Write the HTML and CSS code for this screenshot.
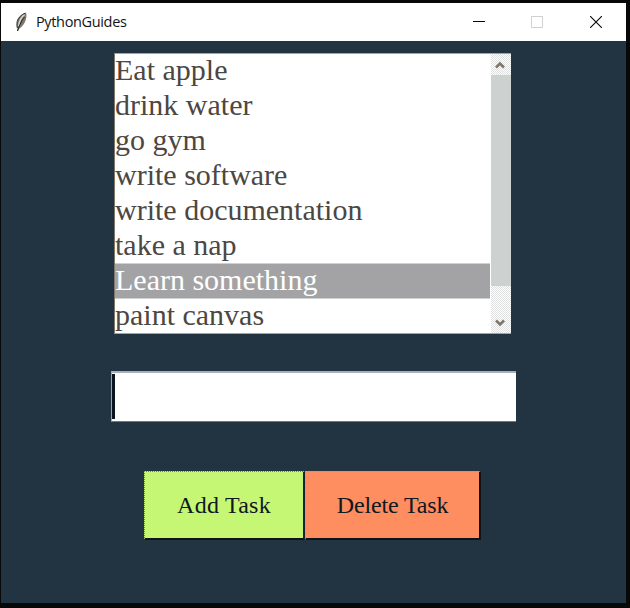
FILE: index.html
```html
<!DOCTYPE html>
<html lang="en">
<head>
<meta charset="utf-8">
<title>PythonGuides</title>
<link rel="stylesheet" href="styles.css">
</head>
<body>
<div class="window">
  <header class="titlebar">
    <svg class="feather" width="14" height="20" viewBox="0 0 14 20">
      <path d="M12 1C8.500 2 4.500 5 3.500 9c-.6 2.500-.5 5 0 7l-.5 3h1l1.500-2.500c3-2 5.500-5.500 6.500-9.500.5-2.500.8-4.500 0-6z" fill="#80766a"/>
      <path d="M10.500 2.500C7.500 5 5.200 9 4.700 14" stroke="#d4d6d4" stroke-width="1.600" fill="none"/>
      <path d="M11.500 1C7.500 2.500 4 5.500 3.200 9.500c-.5 2.500-.3 4.500.1 6.500M10.500 5C8 8 6 12 3.500 19" stroke="#15191c" stroke-width=".9" fill="none"/>
    </svg>
    <span class="title">PythonGuides</span>
    <nav class="controls">
      <svg width="12" height="12" viewBox="0 0 12 12"><path d="M0 5.500h12" stroke="#080808"/></svg>
      <svg width="12" height="12" viewBox="0 0 12 12"><path d="M.5.5h11v11H.5z" stroke="#cdd1d0" fill="none"/></svg>
      <svg width="12" height="12" viewBox="0 0 12 12"><path d="M0 0l12 12M12 0L0 12" stroke="#080808" stroke-width="1.100"/></svg>
    </nav>
  </header>
  <main class="content">
    <div class="listbox">
      <ul class="tasks">
        <li>Eat apple</li>
        <li>drink water</li>
        <li>go gym</li>
        <li>write software</li>
        <li>write documentation</li>
        <li>take a nap</li>
        <li class="selected">Learn something</li>
        <li>paint canvas</li>
      </ul>
      <div class="scrollbar">
        <div class="arrow"><svg width="10" height="8" viewBox="0 0 10 8"><path d="M1 6.500l4-4 4 4" stroke="#80766a" stroke-width="2.600" fill="none"/></svg></div>
        <div class="thumb"></div>
        <div class="arrow down"><svg width="10" height="8" viewBox="0 0 10 8"><path d="M1 1.500l4 4 4-4" stroke="#80766a" stroke-width="2.600" fill="none"/></svg></div>
      </div>
    </div>
    <div class="entry"><span class="caret"></span></div>
    <div class="buttons">
      <button class="add">Add Task</button>
      <button class="delete">Delete Task</button>
    </div>
  </main>
</div>
</body>
</html>
```
FILE: styles.css
```css
* { box-sizing: border-box; }
body { margin: 0; display: flex; height: 608px; background: #080808; }
.window { width: 625px; height: 600px; margin: 3px 0 0 1px; background: #223442; }
.titlebar { height: 38px; background: #fff; display: flex; align-items: center; padding: 0 24px 0 13px; }
.title { font: 14.5px/20px "Open Sans", sans-serif; color: #101418; margin-left: 8px; letter-spacing: -.35px; }
.feather { display: block; }
.controls { margin-left: auto; display: flex; gap: 46px; }
.controls svg { display: block; }
.controls svg:last-child { margin-left: 1px; }
.content { display: flex; flex-direction: column; align-items: flex-start; padding: 12px 0 0 110px; }
.listbox { width: 397px; height: 281px; margin-left: 3px; display: flex; background: #fff; border: 1px solid #a3a3a6; border-left-color: #80766a; border-right: 0; }
.tasks { list-style: none; margin: 0; padding: 0; flex: 1; font: 30px/31px "Liberation Serif", serif; color: #4c4742; }
.tasks li { height: 35px; white-space: nowrap; }
.tasks .selected { background: #a3a3a6; color: #fff; margin: -1px 1px 0 0; height: 36px; line-height: 31px; border: solid #cdd1d0; border-width: 1px 0; }
.scrollbar { width: 20px; display: flex; flex-direction: column; background: repeating-conic-gradient(#dfe1e1 0 25%, #fff 0 50%) 0 0 / 2px 2px; }
.arrow { height: 21px; display: flex; justify-content: center; align-items: center; padding-right: 2px; }
.thumb { height: 211px; background: #cdd1d0; }
.arrow.down { margin-top: auto; }
.entry { width: 405px; height: 51px; margin-top: 37px; background: #fff; border-top: 2px solid #a9afb2; border-left: 1px solid #a3a3a6; border-bottom: 1px solid #80766a; }
.caret { display: block; width: 3px; height: 45px; background: #081420; margin-top: 1px; }
.buttons { display: flex; margin: 49px 0 0 33px; }
button { height: 69px; padding: 0; border: 0; border-radius: 0; font: 24px/66px "Liberation Serif", serif; color: #101820; }
.add { width: 161px; letter-spacing: .25px; background: #c6f774; border: 1px dotted #80766a; border-right: 2px solid #142432; border-bottom: 2px solid #101418; }
.delete { width: 176px; letter-spacing: -.15px; background: #fe8d60; border: 1px solid #a3a3a6; border-left-style: dashed; border-right: 2px solid #101418; border-bottom: 2px solid #101418; }
```
